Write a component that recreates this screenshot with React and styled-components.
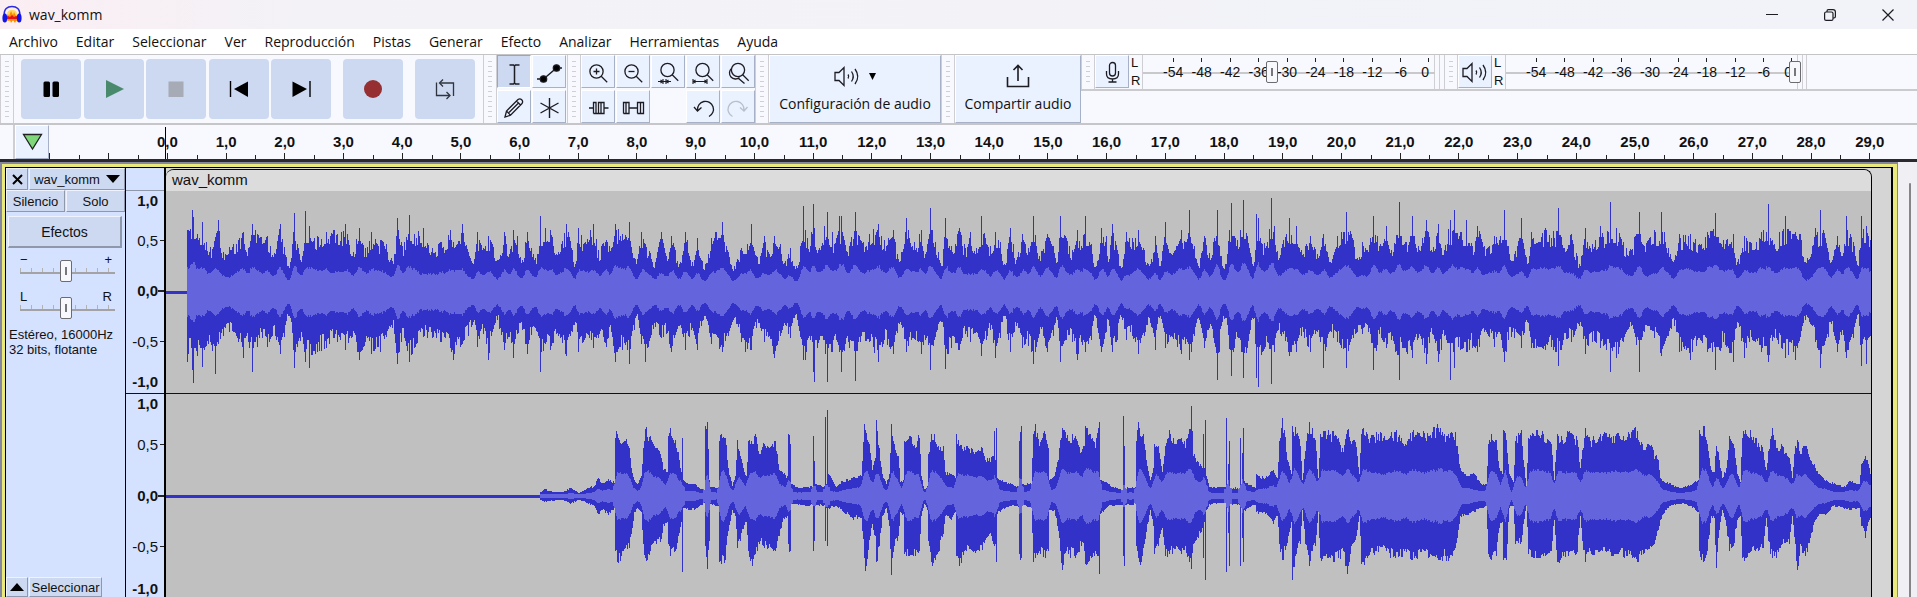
import React from "react";
import styled, { createGlobalStyle, css } from "styled-components";

const GlobalStyle = createGlobalStyle`
  * { box-sizing: border-box; }
  body { margin: 0; background: #f0f0f4; font-family: "Liberation Sans", Arial, sans-serif; color: #111; }
  button { font: inherit; color: inherit; margin: 0; padding: 0; cursor: default; }
  svg { overflow: visible; }
`;

const ui = css`font-family: "Open Sans", "Segoe UI", sans-serif;`;

/* ---------- window chrome ---------- */

const Window = styled.div`
  display: flex;
  flex-direction: column;
  height: 100vh;
  overflow: hidden;
`;

const TitleBar = styled.header`
  ${ui}
  display: flex;
  align-items: center;
  flex: none;
  height: 29px;
  padding-left: 2px;
  font-size: 14px;
  background: linear-gradient(90deg, #fbeef3 0, #f3f2f7 300px, #f1f3f8 100%);
`;

const Title = styled.h1`
  flex: 1;
  margin: 0 0 0 7px;
  font-size: 14px;
  font-weight: 400;
`;

const WindowButton = styled.button`
  display: grid;
  place-items: center;
  width: 58px;
  height: 29px;
  border: 0;
  background: none;
`;

const MenuBar = styled.nav`
  ${ui}
  display: flex;
  flex: none;
  height: 25px;
  gap: 18px;
  padding: 0 9px;
  background: #fff;
  font-size: 14px;
`;

const MenuItem = styled.button`
  border: 0;
  background: none;
  line-height: 24px;
`;

/* ---------- toolbars ---------- */

const ToolDock = styled.div`
  display: flex;
  flex: none;
  height: 71px;
  border-top: 1px solid #c4c4c6;
  border-bottom: 2px solid #c6c6c8;
  background: #f8f9ff;
`;

const Grip = styled.div`
  flex: none;
  width: 14px;
  padding: 6px 4px 4px;
  border: solid #cfcfd3;
  border-width: 0 1px;
  background: repeating-linear-gradient(#d0d0d4 0 1px, transparent 1px 5px) content-box;
`;

const Transport = styled.div`
  display: flex;
  align-items: center;
  gap: 12px;
  padding: 0 8px 0 7px;
`;

const TransportGroup = styled.div`
  display: flex;
  justify-content: space-between;
  width: 310px;
`;

const TransportButton = styled.button`
  display: grid;
  place-items: center;
  width: 60px;
  height: 60px;
  border: 0;
  border-radius: 4px;
  background: #ccd9f1;
`;

const ButtonGrid = styled.div`
  display: grid;
  grid-template-columns: repeat(${(p) => p.$columns}, 34px);
  grid-auto-rows: 33px;
  gap: 2px 1px;
  margin-right: ${(p) => (p.$columns === 2 ? 1 : 0)}px;
`;

const raised = css`
  border: 1px solid;
  border-color: #fff #a6b0c6 #a6b0c6 #fff;
  background: #eaf1ff;
`;

const ToolButton = styled.button`
  display: grid;
  place-items: center;
  width: 34px;
  height: 33px;
  ${raised}
  ${(p) => p.$active && css`background: #ccd9f1; border-color: #9aa6c0 #fff #fff #9aa6c0;`}
`;

const LargeButton = styled.button`
  ${ui}
  display: flex;
  flex-direction: column;
  align-items: center;
  gap: 6px;
  width: ${(p) => p.$width}px;
  padding-top: 8px;
  font-size: 14px;
  line-height: 20px;
  ${raised}
`;

const IconRow = styled.span`
  display: flex;
  align-items: center;
  height: 24px;
  gap: 8px;
`;

const MeterDock = styled.div`
  display: flex;
  flex: 1;
  height: 36px;
  border-bottom: 2px solid #cbcbce;
`;

const ChannelNames = styled.div`
  display: flex;
  flex-direction: column;
  justify-content: space-between;
  width: 14px;
  padding-left: 2px;
  border-right: 1px solid #cfcfd3;
  font-size: 13px;
  line-height: 16px;
`;

const Meter = styled.div`
  position: relative;
  width: 301px;
  padding: 3px 14px 0 16px;
  background:
    linear-gradient(#c9c9cc, #c9c9cc) 0 17px / 292px 2px no-repeat,
    linear-gradient(90deg, transparent 291px, #d0d0d4 291px 292px, transparent 292px 296px, #d0d0d4 296px 297px, transparent 297px);
  &:last-child { border-right: 1px solid #cfcfd3; padding-right: 13px; }
`;

const MeterScale = styled.div`
  display: grid;
  grid-template-columns: repeat(9, 21fr) 11fr;
`;

const MeterMark = styled.span`
  display: flex;
  flex-direction: column;
  align-items: center;
  font-size: 14px;
  line-height: 18px;
  &::before { content: ""; width: 1px; height: 4px; margin-bottom: 1px; background: #222; }
  &:last-child { align-items: flex-end; padding-right: 1px; }
`;

const thumb = css`
  appearance: none;
  box-sizing: border-box;
  width: 12px;
  height: 22px;
  border: 1px solid #6c6c70;
  border-radius: 2px;
  background: linear-gradient(#77777b, #77777b) center / 2px 8px no-repeat, #f7f8fb;
`;

const MeterLevel = styled.input`
  position: absolute;
  left: 2px;
  top: 6px;
  width: 293px;
  height: 22px;
  margin: 0;
  appearance: none;
  background: none;
  &::-webkit-slider-thumb { ${thumb} }
`;

/* ---------- time ruler ---------- */

const Timeline = styled.div`
  position: relative;
  display: flex;
  flex: none;
  height: 37px;
  border-bottom: 3px solid #2a2a2e;
  background: #f8f9ff;
`;

const TimelineEdge = styled.div`
  width: 15px;
  border-right: 2px solid #cfcfd3;
`;

const PinButton = styled.button`
  display: grid;
  place-items: center;
  width: 34px;
  height: 34px;
  ${raised}
`;

const PreRoll = styled.div`
  display: flex;
  align-items: flex-end;
  justify-content: space-between;
  width: 89px;
  padding-right: 29px;
`;

const Tick = styled.i`
  width: 1px;
  height: ${(p) => (p.$major ? 6 : 4)}px;
  background: #222;
`;

const Seconds = styled.div`
  display: flex;
  flex: 1;
  margin-right: 18px;
`;

const Second = styled.div`
  flex: 1 1 0;
  padding-top: 8px;
  text-align: center;
  font-size: 15px;
  font-weight: 700;
  line-height: 18px;
  background:
    linear-gradient(#222, #222) 50% 100% / 1px 6px no-repeat,
    linear-gradient(#222, #222) 0 100% / 1px 4px no-repeat;
`;

const Playhead = styled.div`
  position: absolute;
  left: 165px;
  top: 2px;
  width: 1px;
  height: 32px;
  background: #000;
`;

/* ---------- track ---------- */

const Workspace = styled.main`
  display: flex;
  flex: 1;
  min-height: 0;
`;

const Focus = styled.section`
  display: flex;
  flex: 1;
  border: solid #85879f;
  border-width: 2px 1px 0 2px;
`;

const FocusInner = styled.div`
  display: flex;
  flex: 1;
  border: solid #e9e97c;
  border-width: 3px 4px 0 3px;
`;

const TrackBox = styled.div`
  display: flex;
  flex: 1;
  border: solid #000;
  border-width: 1px 2px 0 1px;
  background: #d5d5d5;
`;

const Panel = styled.aside`
  display: flex;
  flex-direction: column;
  width: 120px;
  border-right: 1px solid #000;
  background: #d4e1ff;
  font-size: 13px;
`;

const PanelRow = styled.div`
  display: flex;
  height: ${(p) => p.$height}px;
  gap: 1px;
`;

const PanelButton = styled.button`
  display: flex;
  align-items: center;
  justify-content: center;
  gap: 6px;
  flex: ${(p) => (p.$width ? `0 0 ${p.$width}px` : "1")};
  overflow: hidden;
  white-space: nowrap;
  border: 1px solid;
  border-color: #eef3ff #8f97aa #8f97aa #eef3ff;
  background: #ccd9f1;
`;

const EffectsButton = styled(PanelButton)`
  flex: none;
  height: 32px;
  margin: 4px 3px 5px 2px;
  border-width: 1px 2px 2px 1px;
  font-size: 14px;
`;

const SliderBlock = styled.label`
  display: block;
  height: 37px;
  margin: 0 10px 0 14px;
`;

const SliderEnds = styled.span`
  display: flex;
  justify-content: space-between;
  height: 11px;
  padding: 0 3px 0 0;
  line-height: 13px;
`;

const Slider = styled.input`
  display: block;
  width: 95px;
  height: 22px;
  margin: -4px 0 0;
  appearance: none;
  background:
    linear-gradient(#a3a3a6, #a3a3a6) 0 12px / 100% 2px no-repeat,
    repeating-linear-gradient(90deg, #b3b3b6 0 1px, transparent 1px 11px) 0 8px / 100% 4px no-repeat;
  &::-webkit-slider-thumb { ${thumb} }
`;

const Format = styled.p`
  flex: 1;
  margin: 0 2px 0 3px;
  line-height: 15px;
`;

const Scale = styled.div`
  width: 40px;
  border-right: 2px solid #000;
  background: #d4e1ff;
`;

const ScaleTop = styled.div`
  height: 23px;
  border-bottom: 1px solid #8f97aa;
`;

const ScaleChannel = styled.div`
  display: grid;
  grid-template-rows: 4fr 5fr 5fr 4fr 20px;
  height: ${(p) => p.$height}px;
  border-top: ${(p) => (p.$divided ? "1px solid #111" : "0")};
`;

const ScaleMark = styled.div`
  display: flex;
  align-items: center;
  justify-content: flex-end;
  height: 18px;
  font-size: 15px;
  font-weight: ${(p) => (p.$bold ? 700 : 400)};
  &::after {
    content: "";
    width: ${(p) => p.$tick}px;
    height: ${(p) => (p.$tick > 5 ? 2 : 1)}px;
    margin-left: ${(p) => 6 - p.$tick}px;
    background: ${(p) => (p.$hidden ? "transparent" : "#222")};
  }
`;

const Clip = styled.article`
  flex: 1;
  min-width: 0;
  margin: 1px 19px 0 0;
  border: 1px solid #000;
  border-width: 1px 1px 0 0;
  border-radius: 8px 8px 0 0;
  overflow: hidden;
  background: #c0c0c0;
`;

const ClipTitle = styled.h2`
  height: 21px;
  margin: 0;
  padding-left: 6px;
  background: #dcdcdc;
  font-size: 15px;
  font-weight: 400;
  line-height: 19px;
`;

const WaveSvg = styled.svg`
  display: block;
  width: 100%;
  height: ${(p) => p.$height}px;
  border-top: ${(p) => (p.$divided ? "1px solid #111" : "0")};
`;

const ScrollArea = styled.div`
  width: 19px;
  padding: 21px 0 0 11px;
  background: #f0f0f4;
`;

const ScrollThumb = styled.div`
  width: 2px;
  height: 100%;
  border-radius: 2px 2px 0 0;
  background: #858587;
`;

/* ---------- audio data: [position, peak above zero, peak below zero] ---------- */

const CLIP_LENGTH = 1705;

const LEFT = [
[21,62,70],[26,82,78],[27,75,91],[31,58,64],[36,70,75],[40,50,54],[44,45,50],[49,55,82],[52,72,52],[57,40,44],[63,45,40],[70,48,44],[77,60,66],[82,44,50],[86,68,80],[93,54,46],[101,56,55],[109,38,44],[114,68,62],[118,45,45],[122,26,24],[125,34,30],[128,79,76],[131,48,55],[136,36,45],[139,81,70],[143,66,76],[151,56,60],[160,60,56],[168,62,46],[179,68,58],[185,36,46],[193,64,68],[199,44,50],[205,60,62],[214,52,60],[220,48,45],[225,34,33],[228,38,42],[231,74,72],[235,50,50],[238,50,46],[243,77,70],[248,58,56],[257,64,45],[266,44,46],[275,50,50],[284,62,56],[287,50,68],[296,68,52],[302,40,44],[307,28,30],[311,60,55],[317,44,42],[322,56,68],[326,48,40],[331,32,28],[338,60,58],[343,38,45],[347,62,66],[351,56,42],[356,32,38],[361,60,62],[367,38,34],[371,38,40],[374,76,80],[379,64,52],[384,62,58],[392,40,44],[400,68,64],[406,42,40],[409,28,30],[412,64,60],[419,50,46],[427,68,56],[432,42,46],[440,52,55],[445,44,40],[449,68,70],[456,58,58],[463,70,72],[468,34,38],[472,38,28],[475,60,52],[479,48,70],[489,30,35],[495,60,46],[500,36,42],[505,56,60],[513,28,34],[519,60,58],[526,30,36],[531,54,58],[535,32,34],[539,28,24],[545,54,52],[556,70,60],[562,40,44],[568,26,26],[575,44,50],[579,38,60],[585,68,58],[590,36,36],
[594,36,36],[598,56,50],[601,42,40],[608,56,66],[614,48,44],[617,28,34],[624,44,46],[630,26,22],[634,46,45],[637,86,68],[639,62,68],[644,46,48],[647,88,80],[648,64,90],[653,44,48],[658,66,48],[661,80,90],[666,60,60],[668,48,44],[673,76,60],[675,76,80],[681,40,44],[689,80,89],[694,52,50],[703,58,50],[712,68,70],[718,52,48],[727,62,62],[733,30,32],[740,74,60],[746,46,46],[755,62,62],[759,38,48],[764,84,78],[769,50,45],[776,26,30],[779,74,77],[785,46,56],[793,64,58],[799,44,42],[804,60,50],[810,44,40],[815,76,64],[820,48,48],[824,46,38],[829,60,66],[834,50,46],[838,28,24],[844,64,60],[850,32,34],[856,58,56],[862,44,54],[867,76,72],[873,36,42],[881,58,60],[887,46,44],[891,30,28],[894,76,70],[900,54,48],[906,42,50],[911,62,68],[915,46,50],[919,76,60],[925,48,48],[929,25,24],[935,64,60],[940,56,40],[942,30,28],[946,68,60],[951,42,48],[955,24,25],[960,60,48],[966,54,44],[972,62,62],[978,42,44],[983,26,26],[989,56,58],[993,26,26],[999,70,56],[1005,38,44],[1015,62,62],[1019,50,52],[1023,82,68],[1028,46,44],[1032,26,26],[1038,56,56],[1045,34,34],[1051,82,88],[1055,36,34],[1060,28,26],[1065,89,84],[1070,46,40],[1077,92,86],[1083,44,42],[1088,30,26],[1090,78,86],[1092,74,95],[1096,48,60],[1101,50,50],[1105,94,92],[1108,66,60],[1112,32,38],[1123,74,64],[1130,66,60],[1135,42,44],[1144,56,60],[1151,38,40],[1157,58,76],[1163,30,40],[1171,56,50],[1180,80,76],[1187,52,46],[1191,34,40],
[1196,50,42],[1202,40,40],[1207,76,78],[1213,46,42],[1220,66,56],[1225,42,48],[1233,90,88],[1240,50,60],[1246,76,66],[1252,46,46],[1260,72,72],[1266,40,42],[1272,68,70],[1278,42,44],[1284,72,88],[1288,82,76],[1294,60,58],[1300,72,60],[1306,46,56],[1311,66,60],[1318,46,40],[1328,56,55],[1333,52,40],[1338,82,70],[1342,46,48],[1348,38,46],[1355,74,56],[1361,28,30],[1365,60,56],[1379,64,58],[1385,54,55],[1392,84,74],[1397,44,48],[1405,58,50],[1413,28,34],[1419,64,62],[1426,48,50],[1434,66,56],[1439,48,52],[1444,90,80],[1450,64,66],[1457,50,50],[1465,42,34],[1473,80,80],[1478,46,40],[1488,62,46],[1495,80,64],[1502,44,44],[1508,32,34],[1513,58,60],[1524,58,68],[1533,48,46],[1541,60,60],[1549,79,78],[1557,52,50],[1567,58,70],[1571,30,30],[1578,56,66],[1583,50,50],[1595,60,60],[1602,88,70],[1608,48,46],[1619,76,66],[1629,60,68],[1634,58,45],[1639,30,28],[1649,64,50],[1654,82,76],[1662,40,45],[1665,30,32],[1671,56,60],[1676,36,38],[1680,76,66],[1687,50,46],[1692,26,22],[1695,76,74],[1700,66,72],[1704,52,44],
];

const RIGHT = [
[374,4,4],[378,7,6],[384,5,5],[397,4,4],[404,8,8],[413,3,4],[421,8,7],[428,10,10],[432,18,18],[436,13,14],[442,17,19],[448,13,12],[449,58,55],[451,62,66],[455,52,60],[459,55,52],[463,48,52],[465,28,38],[468,16,16],[471,12,12],[475,20,16],[477,48,48],[479,67,62],[484,60,55],[490,48,48],[494,42,46],[497,26,28],[501,24,26],[502,60,48],[504,68,60],[509,56,55],[512,44,40],[515,24,26],[516,58,76],[517,16,12],[522,12,14],[528,12,14],[533,8,10],[538,6,7],[539,70,50],[541,74,73],[543,16,45],[544,9,8],[552,9,10],[553,55,66],[555,62,68],[559,58,64],[562,28,35],[566,10,14],[569,20,20],[571,56,52],[574,40,45],[577,28,33],[580,20,26],[582,55,55],[586,52,70],[589,62,58],
[594,42,45],[598,52,52],[603,48,48],[609,55,55],[613,26,40],[617,22,22],[621,20,20],[622,62,48],[624,52,55],[625,12,8],[632,8,9],[640,9,10],[646,9,9],[647,60,55],[648,35,45],[649,12,10],[658,10,9],[659,79,45],[660,12,12],[661,86,50],[662,22,12],[670,9,10],[676,15,15],[686,18,22],[695,20,22],[696,35,35],[698,72,62],[699,66,75],[703,52,44],[706,26,28],[709,38,40],[710,76,66],[713,48,50],[716,22,20],[720,12,12],[723,22,30],[725,72,79],[728,52,50],[732,40,40],[734,14,16],[737,16,18],[738,55,58],[743,60,60],[747,50,60],[753,58,55],[755,20,20],[758,7,8],[761,10,14],[762,42,45],[765,62,66],[768,62,62],[772,50,56],[777,50,38],[779,24,20],[785,22,24],[789,18,16],[790,62,60],[793,50,70],[799,46,54],[802,48,50],[808,42,55],[816,48,54],[820,34,42],[823,38,38],[827,40,48],[828,65,50],[829,36,48],[830,68,66],[831,18,18],[839,14,12],[845,12,10],[852,10,11],[853,55,58],[855,70,62],[856,12,10],[865,12,12],[867,62,66],[869,72,62],[873,50,55],[879,62,62],[882,48,55],[883,16,14],[888,20,14],[891,34,30],[894,56,55],[896,68,74],[900,58,55],[908,58,60],[915,44,50],[918,50,55],[919,70,68],[924,62,60],[929,48,55],[933,74,78],[934,16,18],[942,12,10],[950,8,9],[956,6,9],[957,80,60],[958,50,70],[959,8,9],[969,9,8],[970,55,50],[972,74,62],[974,60,69],[977,62,52],[980,36,36],[984,16,14],[987,28,30],[988,52,58],[992,50,50],[996,24,32],[999,50,60],[1003,66,58],[1007,58,52],[1015,58,58],[1019,48,50],[1022,62,60],[1025,90,73],[1027,40,48],[1032,34,42],[1036,28,32],[1037,62,62],[1038,28,26],[1039,76,84],[1040,20,14],[1043,9,8],[1059,9,7],[1060,78,76],[1061,12,12],[1063,55,70],[1064,8,8],[1073,8,9],[1074,58,70],[1075,12,12],[1077,68,66],[1078,15,14],[1089,8,9],[1090,22,16],[1099,18,18],[1107,26,28],[1111,18,20],[1113,55,48],[1116,78,64],[1122,34,40],[1125,22,26],[1126,70,84],[1130,62,58],[1134,50,48],[1136,16,14],[1139,45,48],[1143,74,70],[1146,68,55],[1149,56,50],[1152,18,16],[1154,62,62],[1164,62,62],[1172,58,62],[1177,44,55],[1181,66,78],[1185,52,50],[1189,54,44],[1193,22,20],
[1195,62,68],[1197,68,66],[1204,58,56],[1212,62,56],[1220,56,55],[1229,64,62],[1238,50,55],[1246,64,64],[1254,60,56],[1266,64,60],[1271,72,62],[1277,60,60],[1283,58,62],[1289,64,52],[1292,42,34],[1294,28,20],[1298,22,18],[1308,22,16],[1315,12,12],[1320,12,10],[1322,52,58],[1325,62,64],[1330,56,60],[1333,28,32],[1336,22,26],[1337,66,64],[1340,56,64],[1343,22,12],[1347,14,10],[1349,55,48],[1355,66,46],[1357,36,28],[1360,10,10],[1362,58,58],[1367,62,62],[1377,62,60],[1385,52,55],[1388,16,24],[1391,62,66],[1396,56,56],[1402,64,60],[1411,56,56],[1414,28,20],[1416,46,45],[1419,68,66],[1424,55,55],[1434,62,55],[1444,58,56],[1453,60,56],[1463,62,58],[1471,65,66],[1476,52,54],[1484,50,50],[1489,40,44],[1492,36,34],[1494,18,24],[1501,14,12],[1510,9,8],[1520,9,8],[1528,14,12],[1532,16,16],[1533,66,55],[1537,70,66],[1541,52,55],[1545,26,20],[1548,24,22],[1550,50,72],[1553,36,34],[1556,18,14],[1560,28,30],[1563,60,55],[1567,52,50],[1571,22,24],[1574,14,20],[1576,58,62],[1579,66,62],[1589,58,55],[1597,44,52],[1600,26,22],[1602,45,45],[1606,68,62],[1610,48,62],[1616,50,48],[1623,38,48],[1626,18,20],[1629,50,48],[1631,56,74],[1634,42,48],[1639,50,60],[1644,36,42],[1648,32,26],[1652,22,20],[1660,16,18],[1667,12,10],[1679,9,12],[1683,15,14],[1693,12,12],[1695,32,30],[1699,40,42],[1702,32,26],[1704,22,22],
];

function noise(seed) {
  let s = seed;
  return () => {
    s = (s * 1664525 + 1013904223) >>> 0;
    return s / 4294967296;
  };
}

/* Fills the pixels between two readings with jittered peaks; columns come in short equal runs. */
function expand(points, seed, limit, low, spread) {
  const random = noise(seed);
  const up = new Array(CLIP_LENGTH).fill(1);
  const down = new Array(CLIP_LENGTH).fill(2);
  let ju = 1;
  let jd = 1;
  for (let i = 0; i < points.length - 1; i++) {
    const [x0, u0, d0] = points[i];
    const [x1, u1, d1] = points[i + 1];
    up[x0] = u0;
    down[x0] = d0;
    for (let x = x0 + 1; x < x1; x++) {
      const k = (x - x0) / (x1 - x0);
      if (random() < 0.7) ju = low + spread * random();
      if (random() < 0.7) jd = low + spread * random();
      up[x] = Math.min(limit, u0 + (u1 - u0) * k) * ju;
      down[x] = Math.min(limit, d0 + (d1 - d0) * k) * jd;
    }
  }
  const last = points[points.length - 1];
  up[last[0]] = last[1];
  down[last[0]] = last[2];
  return { up, down };
}

function average({ up, down }, start, gain, seed) {
  const random = noise(seed);
  const reach = 2;
  return up.map((_, x) => {
    if (x < start) return 0;
    let sum = 0;
    let count = 0;
    for (let n = Math.max(start, x - reach); n <= Math.min(CLIP_LENGTH - 1, x + reach); n++) {
      sum += Math.min(up[n], down[n]);
      count++;
    }
    return Math.min((sum / count) * gain * (0.95 + 0.1 * random()), up[x], down[x]);
  });
}

function outline(up, down, zero) {
  let d = `M0 ${zero}`;
  up.forEach((v, x) => { d += `V${Math.round(zero - v)}H${x + 1}`; });
  for (let x = CLIP_LENGTH - 1; x >= 0; x--) d += `V${Math.round(zero + down[x])}H${x}`;
  return d + "Z";
}

function build(points, { seed, limit, low, spread, gain, zero }) {
  const peaks = expand(points, seed, limit, low, spread);
  const rms = average(peaks, points[0][0], gain, seed + 1);
  return { peak: outline(peaks.up, peaks.down, zero), rms: outline(rms, rms, zero) };
}

const CHANNELS = [
  { name: "izquierdo", height: 202, zero: 101, ...build(LEFT, { seed: 7, limit: 62, low: 0.72, spread: 0.3, gain: 0.46, zero: 101 }) },
  { name: "derecho", height: 206, zero: 102, ...build(RIGHT, { seed: 21, limit: 66, low: 0.88, spread: 0.2, gain: 0.43, zero: 102 }) },
];

function Waveform({ channel, divided }) {
  return (
    <WaveSvg
      $height={channel.height}
      $divided={divided}
      viewBox={`0 0 ${CLIP_LENGTH} ${channel.height - (divided ? 1 : 0)}`}
      preserveAspectRatio="none"
      shapeRendering="crispEdges"
      role="img"
      aria-label={`Canal ${channel.name}`}
    >
      <path d={channel.peak} fill="#3232c8" />
      <path d={channel.rms} fill="#6464dc" />
    </WaveSvg>
  );
}

/* ---------- icons ---------- */

function Icon({ w = 22, h = 22, children, ...rest }) {
  return (
    <svg width={w} height={h} viewBox={`0 0 ${w} ${h}`} fill="none" stroke="#1c1c22" strokeWidth="1.3" aria-hidden="true" {...rest}>
      {children}
    </svg>
  );
}

const Logo = () => (
  <Icon w={20} h={20} stroke="none">
    <path d="M5 10C5 6 7 5 10 5s5 1 5 5v6H5z" fill="#ffd75a" />
    <path d="M4 12l2-3 1 2 2-5 2 4 1-3 2 4 2-1v5l-2 1-1 2-2-3-2 3-1-3-2 1z" fill="#ff8a00" />
    <path d="M4 12l2-1 2 1 2-2 2 2 2-1 2 1v2H4z" fill="#e8101c" />
    <path d="M2.500 12C1 3.500 6 1.500 10 1.500s9 2 7.500 10.500" stroke="#2a2ae0" strokeWidth="1.500" />
    <ellipse cx="2.800" cy="13" rx="2.400" ry="4.500" fill="#1414e6" />
    <ellipse cx="17.200" cy="13" rx="2.400" ry="4.500" fill="#1414e6" />
  </Icon>
);
const Pause = () => (
  <Icon stroke="none" fill="#000"><rect x="3.500" y="3.500" width="6.500" height="15.500" rx="1.500" /><rect x="12.500" y="3.500" width="6.500" height="15.500" rx="1.500" /></Icon>
);
const Play = () => <Icon stroke="none"><path d="M3 2l18 9L3 20z" fill="#4a8a6c" /></Icon>;
const Stop = () => <Icon stroke="none"><rect x="3.500" y="3.500" width="15" height="15.500" fill="#a6abb5" /></Icon>;
const ToStart = () => <Icon><path d="M2.500 3v16" strokeWidth="1.400" stroke="#000" /><path d="M20 3.500v15.500L6 11z" fill="#000" stroke="none" /></Icon>;
const ToEnd = () => <Icon><path d="M20 3v16" strokeWidth="1.400" stroke="#000" /><path d="M2.500 3.500v15.500L17 11z" fill="#000" stroke="none" /></Icon>;
const Record = () => <Icon stroke="none"><circle cx="11" cy="11" r="9" fill="#962f32" /></Icon>;
const Loop = () => (
  <Icon stroke="#30343c"><path d="M6 5h13.500v13M2.500 4.500v13h13" /><path d="M9 1.500L5.500 5 9 8.500M12.500 14l3.500 3.500-3.500 3.500" /></Icon>
);
const TextCursor = () => <Icon><path d="M6.500 4h4l1 1 1-1h4M6.500 23h4l1-1 1 1h4M11.500 5v17" strokeWidth="1.500" /></Icon>;
const Envelope = () => (
  <Icon w={26}><path d="M1 18h6.500L20.500 7H26" /><circle cx="7.500" cy="18" r="3.200" fill="#000" /><circle cx="20.500" cy="7" r="3.200" fill="#000" /></Icon>
);
const Pencil = () => <Icon><path d="M2 21l1.500-6L15 3.500q2-1.500 3.700.3T19 7.500L7.500 19.200zM13.500 5l4 4M3.500 15l4 4.200M15.500 7L6 16.500" /></Icon>;
const Star = () => <Icon><path d="M11.500 2v20M2.500 7l18 10M2.500 17l18-10" strokeWidth="1.400" /></Icon>;

const Lens = ({ children, cx = 9.5, cy = 10.5 }) => (
  <Icon><circle cx={cx} cy={cy} r="6.600" /><path d={`M${cx + 4.700} ${cy + 4.700}l6 6`} />{children}</Icon>
);
const ZoomIn = () => <Lens><path d="M6.500 10.500h6M9.500 7.500v6" /></Lens>;
const ZoomOut = () => <Lens><path d="M6.500 10.500h6" /></Lens>;
const ZoomSelection = () => <Lens cx={10.5} cy={9}><path d="M1 20.500h13M6 18v5M9 18v5M3.500 19l2 1.500-2 1.500M11.500 19l-2 1.500 2 1.500" strokeWidth="1.100" /></Lens>;
const ZoomFit = () => <Lens cx={10.5} cy={9}><path d="M1 20.500h14M1 18v5M15 18v5M3.500 19l-2 1.500 2 1.500M12.500 19l2 1.500-2 1.500" strokeWidth="1.100" /></Lens>;
const ZoomToggle = () => <Lens cx={11} cy={9}><path d="M4.500 7.500a6 6 0 1 0 8 9M11 17l6.500 5.500" /></Lens>;
const Trim = () => <Icon><path d="M2 12h4.500M6.500 17.500V6.500h2.500v11h2.500V6.500h2.500v11h3V6.500h-3M17 12h4.500M6.500 17.500h2.500M11.500 17.500h2.500" /></Icon>;
const Silence = () => <Icon><path d="M1.500 17.500V6.500h2.500v11h3V6.500h-3M7 12h8.500M15.500 17.500V6.500h3v11h3V6.500h-3M1.500 17.500h2.500M15.500 17.500h3" /></Icon>;
const Undo = () => <Icon><path d="M5.500 14a8 8 0 1 1 11.500 6.500M2 11l3.500 4 4-3.500" /></Icon>;
const Redo = () => <Icon stroke="#b9bfcd"><path d="M17 14a8 8 0 1 0-11.500 6.500M20.500 11L17 15l-4-3.500" /></Icon>;
const Speaker = () => (
  <Icon w={26}><path d="M1 7.500h4L10 2.500v18l-5-5H1zM14 9.500q1.500 2 0 4M17.500 6.500q3.500 5 0 10M21 4q5.500 7.500 0 15" /></Icon>
);
const Caret = () => <Icon w={8} h={8} stroke="none"><path d="M1 1h7L4.500 8z" fill="#000" /></Icon>;
const Share = () => <Icon w={24} h={24} strokeWidth="1.600"><path d="M1.500 13v9.500h21V13M12 17V2M7.500 6L12 1.500 16.500 6" /></Icon>;
const Mic = () => <Icon><rect x="8.500" y="1.500" width="6" height="13.500" rx="3" /><path d="M5.500 10v3q0 5 6 5t6-5v-3M11.500 18v3M7.500 21h8" /></Icon>;

/* ---------- page ---------- */

const MENUS = ["Archivo", "Editar", "Seleccionar", "Ver", "Reproducción", "Pistas", "Generar", "Efecto", "Analizar", "Herramientas", "Ayuda"];
const DECIBELS = ["-54", "-48", "-42", "-36", "-30", "-24", "-18", "-12", "-6", "0"];
const LEVELS = ["1,0", "0,5", "0,0", "-0,5", "-1,0"];
const EDIT_TOOLS = [
  ["Acercar", ZoomIn], ["Alejar", ZoomOut], ["Ajustar selección", ZoomSelection], ["Ajustar proyecto", ZoomFit], ["Alternar zoom", ZoomToggle],
  ["Recortar", Trim], ["Silenciar", Silence], null, ["Deshacer", Undo], ["Rehacer", Redo],
];

function LevelMeter({ label, icon, value }) {
  return (
    <>
      <Grip />
      <ToolButton aria-label={label}>{icon}</ToolButton>
      <ChannelNames><span>L</span><span>R</span></ChannelNames>
      <Meter>
        <MeterScale>{DECIBELS.map((d) => <MeterMark key={d}>{d}</MeterMark>)}</MeterScale>
        <MeterLevel type="range" min="0" max="100" defaultValue={value} aria-label={`Nivel de ${label}`} />
      </Meter>
    </>
  );
}

function TrackSlider({ low, high, label }) {
  return (
    <SliderBlock>
      <SliderEnds><span>{low}</span><span>{high}</span></SliderEnds>
      <Slider type="range" min="-50" max="50" defaultValue="-2" aria-label={label} />
    </SliderBlock>
  );
}

export default function App() {
  return (
    <Window>
      <GlobalStyle />
      <TitleBar>
        <Logo />
        <Title>wav_komm</Title>
        <WindowButton aria-label="Minimizar"><Icon w={12} h={12} strokeWidth="1"><path d="M0 5.500h12" /></Icon></WindowButton>
        <WindowButton aria-label="Restaurar"><Icon w={12} h={12} strokeWidth="1.200"><rect x=".6" y="3" width="8.400" height="8.400" rx="1.500" /><path d="M3 3V2q0-1.400 1.400-1.400H9q2.400 0 2.400 2.400v4.600Q11.400 9 10 9H9" /></Icon></WindowButton>
        <WindowButton aria-label="Cerrar"><Icon w={12} h={12} strokeWidth="1.200"><path d="M.5.5l11 11M11.500.5l-11 11" /></Icon></WindowButton>
      </TitleBar>

      <MenuBar>{MENUS.map((m) => <MenuItem key={m}>{m}</MenuItem>)}</MenuBar>

      <ToolDock>
        <Grip />
        <Transport>
          <TransportGroup>
            <TransportButton aria-label="Pausa"><Pause /></TransportButton>
            <TransportButton aria-label="Reproducir"><Play /></TransportButton>
            <TransportButton aria-label="Detener"><Stop /></TransportButton>
            <TransportButton aria-label="Ir al inicio"><ToStart /></TransportButton>
            <TransportButton aria-label="Ir al final"><ToEnd /></TransportButton>
          </TransportGroup>
          <TransportButton aria-label="Grabar"><Record /></TransportButton>
          <TransportButton aria-label="Bucle"><Loop /></TransportButton>
        </Transport>
        <Grip />
        <ButtonGrid $columns={2}>
          <ToolButton $active aria-label="Selección"><TextCursor /></ToolButton>
          <ToolButton aria-label="Envolvente"><Envelope /></ToolButton>
          <ToolButton aria-label="Dibujo"><Pencil /></ToolButton>
          <ToolButton aria-label="Multiherramienta"><Star /></ToolButton>
        </ButtonGrid>
        <Grip />
        <ButtonGrid $columns={5}>
          {EDIT_TOOLS.map((tool, i) => {
            if (!tool) return <span key={i} />;
            const [label, Glyph] = tool;
            return <ToolButton key={i} aria-label={label}><Glyph /></ToolButton>;
          })}
        </ButtonGrid>
        <Grip />
        <LargeButton $width={172}>
          <IconRow><Speaker /><Caret /></IconRow>
          Configuración de audio
        </LargeButton>
        <Grip />
        <LargeButton $width={126}>
          <IconRow><Share /></IconRow>
          Compartir audio
        </LargeButton>
        <MeterDock>
          <LevelMeter label="grabación" icon={<Mic />} value={43} />
          <LevelMeter label="reproducción" icon={<Speaker />} value={100} />
        </MeterDock>
      </ToolDock>

      <Timeline>
        <TimelineEdge />
        <PinButton aria-label="Fijar cabezal">
          <Icon w={20} h={18}><path d="M1.500 1.500h18L10.500 16z" fill="#7ed87a" stroke="#222" /></Icon>
        </PinButton>
        <PreRoll><Tick $major /><Tick /><Tick $major /></PreRoll>
        <Seconds>
          {Array.from({ length: 30 }, (_, n) => <Second key={n}>{n},0</Second>)}
        </Seconds>
        <Playhead />
      </Timeline>

      <Workspace>
        <Focus aria-label="Pista wav_komm">
          <FocusInner>
            <TrackBox>
              <Panel>
                <PanelRow $height={22}>
                  <PanelButton $width={22} aria-label="Cerrar pista"><Icon w={11} h={11} strokeWidth="2" stroke="#000"><path d="M1 1l9 9M10 1l-9 9" /></Icon></PanelButton>
                  <PanelButton>wav_komm<Icon w={14} h={8} stroke="none"><path d="M0 0h14L7 8z" fill="#000" /></Icon></PanelButton>
                </PanelRow>
                <PanelRow $height={22}>
                  <PanelButton>Silencio</PanelButton>
                  <PanelButton>Solo</PanelButton>
                </PanelRow>
                <EffectsButton>Efectos</EffectsButton>
                <TrackSlider low="−" high="+" label="Ganancia" />
                <TrackSlider low="L" high="R" label="Panorama" />
                <Format>Estéreo, 16000Hz<br />32 bits, flotante</Format>
                <PanelRow $height={20}>
                  <PanelButton $width={22} aria-label="Contraer"><Icon w={14} h={8} stroke="none"><path d="M0 8h14L7 0z" fill="#000" /></Icon></PanelButton>
                  <PanelButton $width={73}>Seleccionar</PanelButton>
                </PanelRow>
              </Panel>
              <Scale>
                <ScaleTop />
                {CHANNELS.map((c, i) => (
                  <ScaleChannel key={c.name} $height={c.height} $divided={i > 0}>
                    {LEVELS.map((l, n) => (
                      <ScaleMark key={l} $bold={n % 2 === 0} $hidden={n === 0 || n === 4} $tick={n === 2 ? 6 : 4}>{l}</ScaleMark>
                    ))}
                  </ScaleChannel>
                ))}
              </Scale>
              <Clip>
                <ClipTitle>wav_komm</ClipTitle>
                {CHANNELS.map((c, i) => <Waveform key={c.name} channel={c} divided={i > 0} />)}
              </Clip>
            </TrackBox>
          </FocusInner>
        </Focus>
        <ScrollArea><ScrollThumb /></ScrollArea>
      </Workspace>
    </Window>
  );
}
